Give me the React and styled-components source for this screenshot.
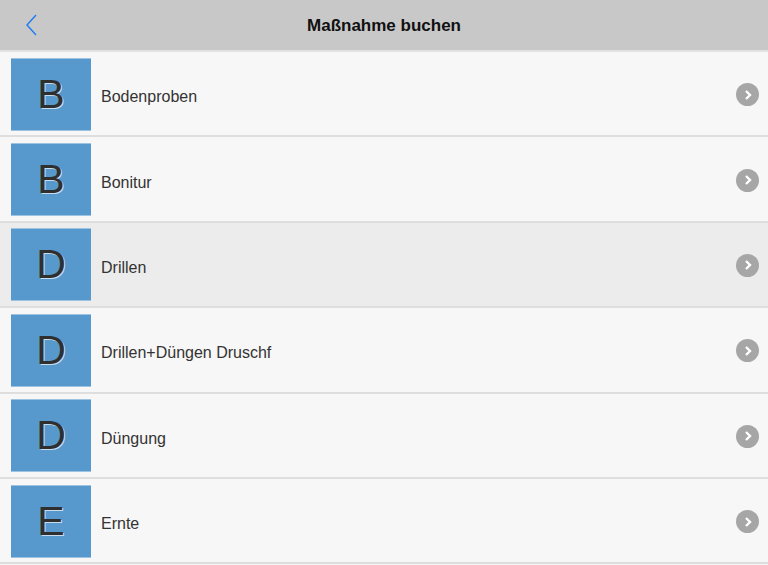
import React from "react";
import styled, { createGlobalStyle } from "styled-components";

const Global = createGlobalStyle`
  body {
    margin: 0;
    background: #f7f7f7;
    font-family: "Liberation Sans", Arial, sans-serif;
  }
`;

const Header = styled.header`
  height: 50px;
  background: #c8c8c8;
  border-bottom: 2px solid #e2e2e2;
  display: flex;
  align-items: center;
  justify-content: center;
  position: relative;
`;

const Title = styled.h1`
  margin: 1px 0 0;
  font-size: 17px;
  font-weight: bold;
  color: #111;
`;

const BackButton = styled.button`
  position: absolute;
  left: 22px;
  top: 14px;
  background: none;
  border: 0;
  padding: 0;
  width: 20px;
  height: 24px;
`;

const List = styled.ul`
  list-style: none;
  margin: 0;
  padding: 0;
`;

const Row = styled.li`
  height: 83.4px;
  border-bottom: 2px solid #dedede;
  background: ${(p) => (p.$active ? "#ececec" : "#f7f7f7")};
  display: flex;
  align-items: center;
  padding: 0 9px 0 11px;
`;

const Tile = styled.div`
  width: 80px;
  height: 73px;
  background: #5799cc;
  border-top: 1px solid #9cc3e2;
  border-bottom: 1px solid #9cc3e2;
  box-sizing: border-box;
  display: flex;
  align-items: center;
  justify-content: center;
  font-size: 41px;
  color: #2f2f2f;
  text-shadow: 1px 1px 0 #c8dcec;
  margin-top: 1px;
`;

const Label = styled.span`
  flex: 1;
  margin-left: 10px;
  margin-top: 7px;
  font-size: 16px;
  color: #333;
`;

const Chevron = styled.span`
  width: 23px;
  height: 23px;
  border-radius: 50%;
  background: #a6a6a6;
  display: flex;
  align-items: center;
  justify-content: center;
  margin-top: 2px;
`;

const items = [
  "Bodenproben",
  "Bonitur",
  "Drillen",
  "Drillen+Düngen Druschf",
  "Düngung",
  "Ernte",
];

export default function App() {
  return (
    <>
      <Global />
      <Header>
        <BackButton>
          <svg width="14" height="22" viewBox="0 0 14 22">
            <path d="M11 1 L2 11 L11 21" fill="none" stroke="#1b7cf4" strokeWidth="1.4" />
          </svg>
        </BackButton>
        <Title>Maßnahme buchen</Title>
      </Header>
      <List>
        {items.map((name, i) => (
          <Row key={name} $active={i === 2}>
            <Tile>{name[0]}</Tile>
            <Label>{name}</Label>
            <Chevron>
              <svg width="12" height="12" viewBox="0 0 12 12">
                <path d="M4 2 L8 6 L4 10" fill="none" stroke="#fff" strokeWidth="2.4" />
              </svg>
            </Chevron>
          </Row>
        ))}
      </List>
    </>
  );
}
